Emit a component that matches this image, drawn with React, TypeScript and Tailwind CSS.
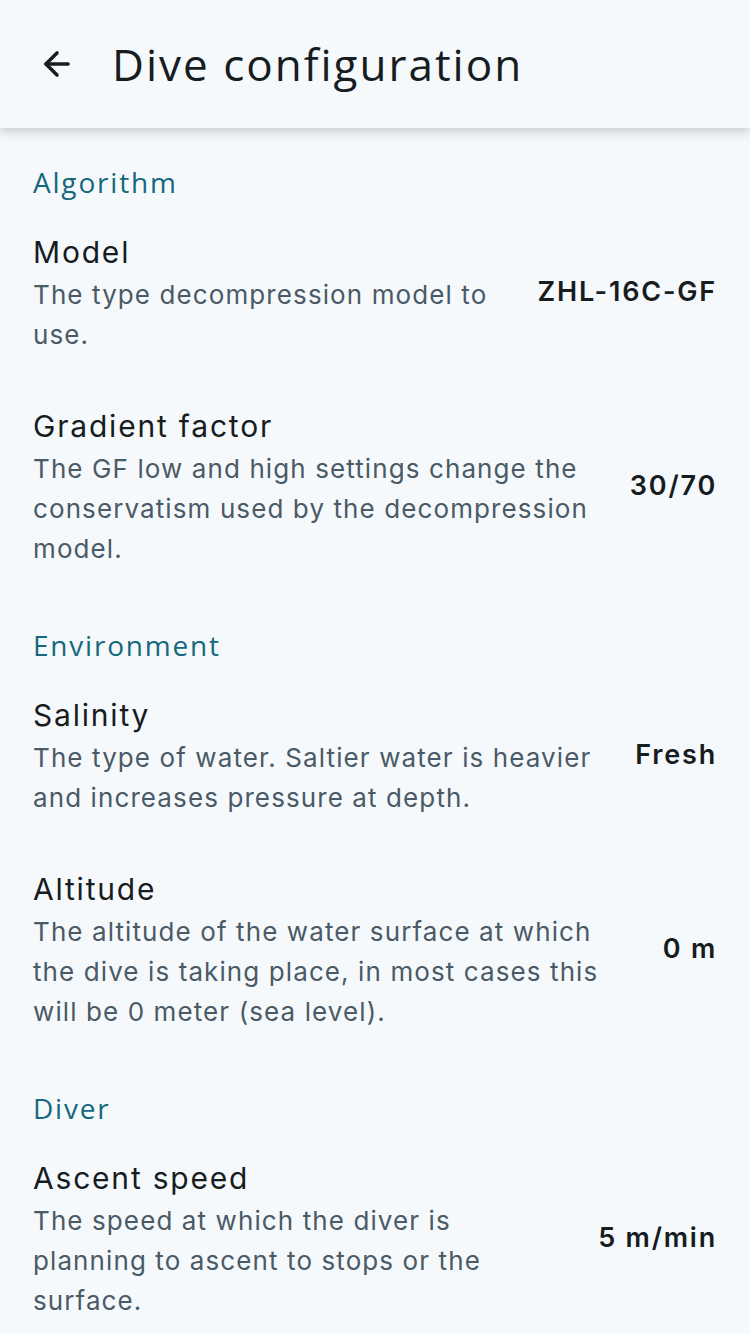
import { ArrowLeft } from "lucide-react";

interface Setting {
  title: string;
  description: string;
  value: string;
}

interface Section {
  header: string;
  items: Setting[];
}

const sections: Section[] = [
  {
    header: "Algorithm",
    items: [
      {
        title: "Model",
        description: "The type decompression model to use.",
        value: "ZHL-16C-GF",
      },
      {
        title: "Gradient factor",
        description:
          "The GF low and high settings change the conservatism used by the decompression model.",
        value: "30/70",
      },
    ],
  },
  {
    header: "Environment",
    items: [
      {
        title: "Salinity",
        description:
          "The type of water. Saltier water is heavier and increases pressure at depth.",
        value: "Fresh",
      },
      {
        title: "Altitude",
        description:
          "The altitude of the water surface at which the dive is taking place, in most cases this will be 0 meter (sea level).",
        value: "0 m",
      },
    ],
  },
  {
    header: "Diver",
    items: [
      {
        title: "Ascent speed",
        description:
          "The speed at which the diver is planning to ascent to stops or the surface.",
        value: "5 m/min",
      },
    ],
  },
];

function SettingRow({ item }: { item: Setting }) {
  return (
    <div className="flex items-center gap-10 px-[33px] pt-[22px] pb-[26px]">
      <div className="flex-1 min-w-0">
        <div className="text-[30px] leading-[46px] tracking-[1.8px] text-[#171c1f]">
          {item.title}
        </div>
        <div className="text-[26px] leading-[40px] tracking-[1.1px] text-[#4a5a66]">
          {item.description}
        </div>
      </div>
      <div className="shrink-0 text-[27px] font-semibold tracking-[1.8px] text-[#171c1f]">
        {item.value}
      </div>
    </div>
  );
}

export default function App() {
  return (
    <div
      className="min-h-[1334px] bg-[#f5f9fc]"
      style={{ fontFamily: "Inter, Roboto, 'Liberation Sans', sans-serif" }}
    >
      <header className="relative z-10 flex h-[128px] items-center gap-[36px] bg-[#f5f9fc] px-[38px] shadow-[0_4px_10px_rgba(0,0,0,0.18)]">
        <ArrowLeft className="h-[38px] w-[38px] text-[#171c1f]" strokeWidth={2.2} />
        <h1
          className="text-[44px] tracking-[2px] text-[#171c1f]"
          style={{ fontFamily: "'Open Sans', 'Noto Sans', sans-serif" }}
        >
          Dive configuration
        </h1>
      </header>
      <main className="pt-[4px]">
        {sections.map((section) => (
          <section key={section.header}>
            <h2
              className="px-[33px] pt-[32px] pb-[7px] text-[28px] leading-[36px] tracking-[1.8px] text-[#15687c]"
              style={{ fontFamily: "'Open Sans', 'Noto Sans', sans-serif" }}
            >
              {section.header}
            </h2>
            {section.items.map((item) => (
              <SettingRow key={item.title} item={item} />
            ))}
          </section>
        ))}
      </main>
    </div>
  );
}
